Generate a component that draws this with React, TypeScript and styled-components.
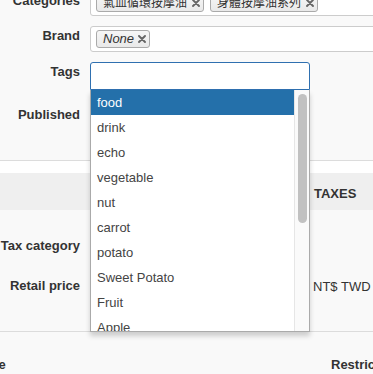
import React from "react";
import styled, { createGlobalStyle } from "styled-components";

const GlobalStyle = createGlobalStyle`
  html, body {
    margin: 0;
    padding: 0;
    background: #f9f9f9;
    overflow: hidden;
  }
  body {
    font-family: "Liberation Sans", Helvetica, Arial, "Noto Sans CJK TC", sans-serif;
    font-size: 13px;
    color: #333;
  }
  * { box-sizing: border-box; }
`;

const Page = styled.div`
  margin-top: -10px;
  width: 373px;
`;

const FormSection = styled.section`
  display: grid;
  grid-template-columns: 80px 1fr;
  column-gap: 10px;
  row-gap: 10px;
  padding-bottom: 36px;
  border-bottom: 1px solid #dcdcdc;
`;

const Label = styled.label<{ $offset?: number }>`
  text-align: right;
  font-weight: bold;
  line-height: 18px;
  padding-top: ${(p) => 1 + (p.$offset ?? 0)}px;
  white-space: nowrap;
  color: #333;
`;

const ChipBox = styled.div<{ $width: number }>`
  width: ${(p) => p.$width}px;
  min-height: 26px;
  background: #fff;
  border: 1px solid #ccc;
  border-radius: 3px;
  padding: 3px 5px;
  display: flex;
  gap: 6px;
  align-items: flex-start;
`;

const Chip = styled.span<{ $italic?: boolean }>`
  display: inline-flex;
  align-items: center;
  gap: ${(p) => (p.$italic ? 4 : 5)}px;
  height: 18px;
  padding: 0 3px 0 6px;
  border: 1px solid #aaa;
  border-radius: 3px;
  background: linear-gradient(#f6f6f6, #e9e9e9);
  font-size: ${(p) => (p.$italic ? 13 : 12)}px;
  font-style: ${(p) => (p.$italic ? "italic" : "normal")};
  color: #333;
  white-space: nowrap;
  line-height: 16px;
  font-family: "Liberation Sans", Helvetica, Arial, "Noto Sans CJK TC", sans-serif;
`;

const Remove = () => (
  <svg width="8" height="8" viewBox="0 0 8 8" aria-hidden>
    <path d="M1 1 L7 7 M7 1 L1 7" stroke="#666" strokeWidth="1.9" strokeLinecap="round" />
  </svg>
);

const TagsWrap = styled.div`
  position: relative;
  width: 220px;
`;

const TagsInput = styled.div`
  height: 28px;
  background: #fff;
  border: 1px solid #2f70b0;
  border-radius: 3px;
  border-bottom-left-radius: 0;
  border-bottom-right-radius: 0;
`;

const Dropdown = styled.div`
  position: absolute;
  top: 28px;
  left: 0;
  width: 220px;
  height: 242px;
  background: #fff;
  border: 1px solid #aaa;
  border-top: none;
  box-shadow: 0 4px 5px rgba(0, 0, 0, 0.18);
  display: flex;
  z-index: 10;
  overflow: hidden;
`;

const List = styled.ul`
  list-style: none;
  margin: 0;
  padding: 0;
  flex: 1;
  overflow: hidden;
`;

const Option = styled.li<{ $active?: boolean }>`
  height: 25px;
  line-height: 25px;
  padding-left: 6px;
  font-size: 13px;
  background: ${(p) => (p.$active ? "#2470aa" : "transparent")};
  color: ${(p) => (p.$active ? "#fff" : "#444")};
`;

const Track = styled.div`
  width: 15px;
  border-left: 1px solid #e6e6e6;
  background: #fafafa;
  padding: 4px 2px 0 2px;
  display: flex;
  justify-content: center;
`;

const Thumb = styled.div`
  width: 9px;
  height: 129px;
  border-radius: 5px;
  background: #c1c1c1;
`;

const PublishedRow = styled.div`
  height: 20px;
`;

const Spacer = styled.div`
  height: 12px;
  background: #fff;
`;

const SectionHeader = styled.div`
  display: grid;
  grid-template-columns: 314px 1fr;
  height: 37px;
  align-items: center;
  background: #efefef;
  padding-top: 4px;
`;

const HeaderTitle = styled.span`
  font-weight: bold;
  font-size: 13px;
  color: #333;
`;

const PriceSection = styled.section`
  display: grid;
  grid-template-columns: 80px 213px auto;
  column-gap: 10px;
  row-gap: 10px;
  padding: 23px 0 28px;
  border-bottom: 1px solid #dcdcdc;
`;

const Field = styled.div`
  height: 30px;
  background: #fff;
  border: 1px solid #ccc;
  border-radius: 3px;
`;

const Currency = styled.span`
  padding-top: 5px;
  line-height: 18px;
  white-space: nowrap;
`;

const Empty = styled.span``;

const TableHeader = styled.div`
  display: grid;
  grid-template-columns: 357px 1fr;
  margin-left: -26px;
  padding-top: 24px;
  line-height: 18px;
  font-weight: bold;
  white-space: nowrap;
`;

const options = [
  "food",
  "drink",
  "echo",
  "vegetable",
  "nut",
  "carrot",
  "potato",
  "Sweet Potato",
  "Fruit",
  "Apple",
  "Banana",
];

export default function App() {
  return (
    <>
      <GlobalStyle />
      <Page>
        <FormSection>
          <Label $offset={1}>Categories</Label>
          <ChipBox $width={300}>
            <Chip>
              氣血循環按摩油
              <Remove />
            </Chip>
            <Chip>
              身體按摩油系列
              <Remove />
            </Chip>
          </ChipBox>

          <Label>Brand</Label>
          <ChipBox $width={300}>
            <Chip $italic>
              None
              <Remove />
            </Chip>
          </ChipBox>

          <Label>Tags</Label>
          <TagsWrap>
            <TagsInput />
            <Dropdown>
              <List>
                {options.map((o, i) => (
                  <Option key={o} $active={i === 0}>
                    {o}
                  </Option>
                ))}
              </List>
              <Track>
                <Thumb />
              </Track>
            </Dropdown>
          </TagsWrap>

          <Label $offset={5}>Published</Label>
          <PublishedRow />
        </FormSection>

        <Spacer />

        <SectionHeader>
          <Empty />
          <HeaderTitle>TAXES</HeaderTitle>
        </SectionHeader>

        <PriceSection>
          <Label $offset={3}>Tax category</Label>
          <Field />
          <Empty />
          <Label $offset={3}>Retail price</Label>
          <Field />
          <Currency>NT$ TWD</Currency>
        </PriceSection>

        <TableHeader>
          <span>Price</span>
          <span>Restrictions</span>
        </TableHeader>
      </Page>
    </>
  );
}
